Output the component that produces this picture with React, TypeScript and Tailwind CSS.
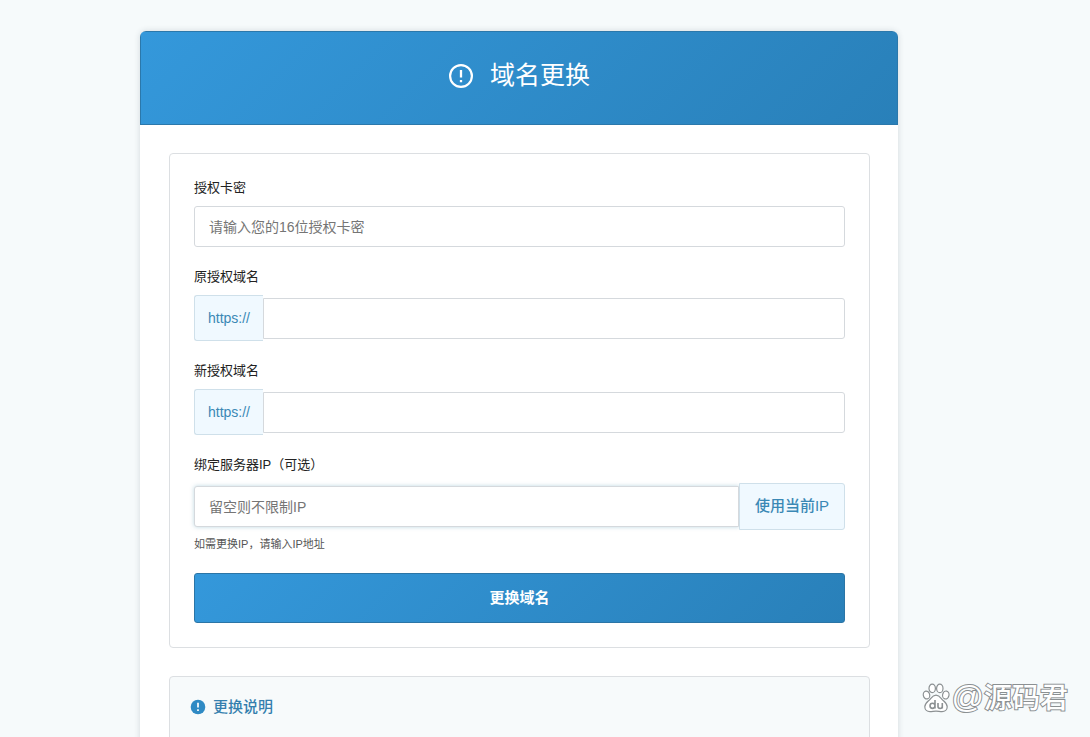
import { useState, type ReactNode } from 'react';

const inputBase =
  'h-[41px] min-w-0 flex-1 border border-[#d5d9dd] bg-white px-[14px] text-[14px] text-[#333] outline-none placeholder:text-[#757575] placeholder:opacity-100';

function Field({ id, label, children }: { id: string; label: string; children: ReactNode }) {
  return (
    <div>
      <label htmlFor={id} className="mb-2 block text-[13px] leading-5 text-[#222]">
        {label}
      </label>
      {children}
    </div>
  );
}

function DomainField({ id, label }: { id: string; label: string }) {
  return (
    <Field id={id} label={label}>
      <div className="flex items-center">
        <span className="flex h-[46px] w-[69px] items-center justify-center rounded-l-[3px] border border-r-0 border-[#cfe0ea] bg-[#f0f9ff] text-[14px] text-[#3a88b5]">
          https://
        </span>
        <input id={id} type="text" className={`${inputBase} rounded-r-[3px]`} />
      </div>
    </Field>
  );
}

function Watermark() {
  return (
    <div className="absolute right-[22px] bottom-[20px] flex items-center gap-[2px]">
      <svg viewBox="0 0 28 30" className="h-[30px] w-7" fill="#fff" stroke="#8b9092" strokeWidth="1.2">
        <ellipse cx="4.5" cy="12" rx="3.2" ry="4" transform="rotate(-12 4.5 12)" />
        <ellipse cx="10.2" cy="5.4" rx="3.2" ry="4.2" />
        <ellipse cx="17.8" cy="5.4" rx="3.2" ry="4.2" />
        <ellipse cx="23.8" cy="12" rx="3.2" ry="4" transform="rotate(12 23.8 12)" />
        <path d="M14 12.2c-3.1 0-4.4 2.2-6 4.1-1.9 2.2-5.2 3.8-5.2 7.4 0 3.200 2.400 5 5.200 5 2.300 0 3.600-.5 6-.5s3.700.5 6 .5c2.800 0 5.200-1.800 5.200-5 0-3.600-3.300-5.200-5.200-7.400-1.600-1.900-2.900-4.100-6-4.100z" />
        <g fill="none" strokeWidth="1.600">
          <path d="M13 17v8.600M13 22.800c0-3.400-5-3.400-5 0s5 3.400 5 0" />
          <path d="M16 20v3.600c0 2.600 4.300 2.600 4.300 0V20v5.600" />
        </g>
      </svg>
      <span className="text-[28px] leading-9 font-medium text-white [-webkit-text-stroke:2px_#8b9092] [paint-order:stroke_fill]">
        <span className="text-[32px] leading-9">@</span>源码君
      </span>
    </div>
  );
}

export default function App() {
  const [ip, setIp] = useState('');

  return (
    <div className="relative h-screen overflow-hidden bg-[#f6fafb] pt-[31px] pr-[192px] pl-[140px] font-['Liberation_Sans','Noto_Sans_CJK_SC',sans-serif]">
      <main className="overflow-hidden rounded-[6px] bg-white shadow-[0_0_6px_rgba(30,50,70,0.16)]">
        <header className="flex h-[94px] items-start justify-center gap-4 border border-[#2b78ab] bg-linear-[135deg,#3498db,#2980b9] pt-[25px] text-white">
          <svg viewBox="0 0 26 26" className="mt-[6px] size-[26px]" fill="none" stroke="currentColor">
            <circle cx="13" cy="13" r="10.900" strokeWidth="2.200" />
            <path d="M13 7v7.500M13 17v2.200" strokeWidth="2.300" />
          </svg>
          <h1 className="text-[25px] leading-9 font-normal">域名更换</h1>
        </header>

        <div className="pt-[28px] pr-[28px] pb-8 pl-[29px]">
          <form
            className="flex flex-col rounded-[4px] border border-[#dcdfe2] px-6 pt-6 pb-6"
            onSubmit={(event) => event.preventDefault()}
          >
            <div className="flex flex-col gap-5">
              <Field id="card-key" label="授权卡密">
                <div className="flex">
                  <input
                    id="card-key"
                    type="text"
                    placeholder="请输入您的16位授权卡密"
                    className={`${inputBase} rounded-[3px]`}
                  />
                </div>
              </Field>
              <DomainField id="old-domain" label="原授权域名" />
              <DomainField id="new-domain" label="新授权域名" />
              <Field id="server-ip" label="绑定服务器IP（可选）">
                <div className="flex items-center">
                  <input
                    id="server-ip"
                    type="text"
                    value={ip}
                    onChange={(event) => setIp(event.target.value)}
                    placeholder="留空则不限制IP"
                    className={`${inputBase} rounded-l-[3px] shadow-[0_0_4px_rgba(70,140,170,0.35)]`}
                  />
                  <button
                    type="button"
                    onClick={() => setIp('127.0.0.1')}
                    className="relative h-[47px] w-[106px] rounded-r-[3px] border border-[#cfe0ea] bg-[#f0f9ff] text-[15px] font-medium text-[#3a88b5]"
                  >
                    使用当前IP
                  </button>
                </div>
                <p className="mt-1 text-[11px] leading-5 text-[#555]">如需更换IP，请输入IP地址</p>
              </Field>
            </div>
            <button
              type="submit"
              className="mt-[19px] h-[50px] rounded-[3px] border border-[#2b75a6] bg-linear-[135deg,#3498db,#2980b9] text-[15px] font-bold text-white"
            >
              更换域名
            </button>
          </form>

          <section className="mt-[28px] rounded-[4px] border border-[#dcdfe2] bg-[#f7fafb] px-5 pt-5 pb-24">
            <h2 className="flex items-center gap-[7px] text-[15px] leading-5 font-medium text-[#347fae]">
              <svg viewBox="0 0 16 16" className="size-4">
                <circle cx="8" cy="8" r="7.300" fill="#2f8ac4" />
                <path d="M8 3.800v4.800M8 10.200v1.900" stroke="#fff" strokeWidth="1.700" />
              </svg>
              更换说明
            </h2>
          </section>
        </div>
      </main>
      <Watermark />
    </div>
  );
}
